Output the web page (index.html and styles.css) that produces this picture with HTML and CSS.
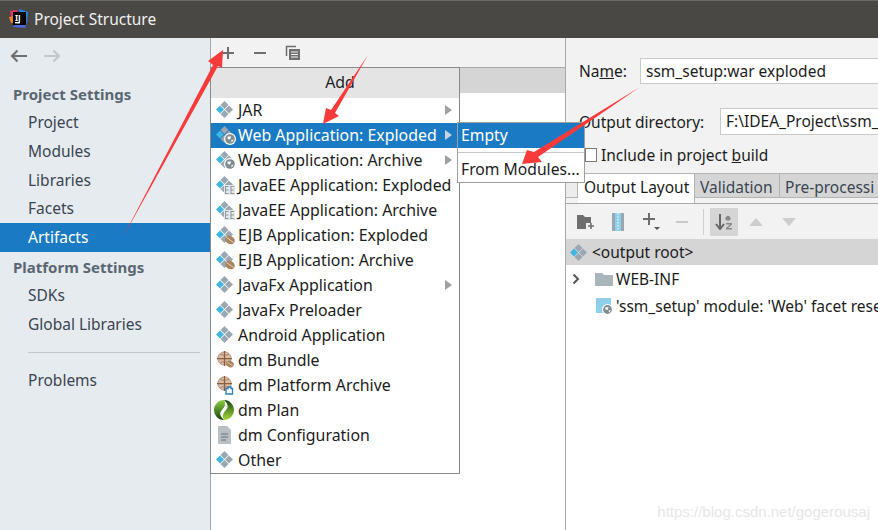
FILE: index.html
```html
<html>
<head>
    <title>Project Structure</title>
    <link rel="stylesheet" href="styles.css">
</head>
<body>
    <svg class="defs" width="0" height="0">
        <defs>
            <linearGradient id="planLeft" x1="0" y1="0" x2="0" y2="1">
                <stop offset="0" stop-color="#8ccf3f"/>
                <stop offset="1" stop-color="#14470f"/>
            </linearGradient>
            <linearGradient id="planRight" x1="0" y1="0" x2="0" y2="1">
                <stop offset="0" stop-color="#14470f"/>
                <stop offset="1" stop-color="#a8d83c"/>
            </linearGradient>
        </defs>
        <symbol id="artifact" viewBox="0 0 17 17">
            <path d="M8.500 0l4 4-4 4-4-4z" fill="#9aa7b0"/>
            <path d="M4 4.500l4 4-4 4-4-4z" fill="#40b6e0"/>
            <path d="M13 4.500l4 4-4 4-4-4z" fill="#9aa7b0"/>
            <path d="M8.500 9l4 4-4 4-4-4z" fill="#9aa7b0"/>
        </symbol>
        <symbol id="globe" viewBox="0 0 10 10">
            <circle cx="5" cy="5" r="5" fill="#fff"/>
            <circle cx="5" cy="5" r="4" fill="#7f8b91"/>
            <path d="M3 3h3l-1 2.500-2-.5zM6 6l2-.5-1.500 2.500z" fill="#fff"/>
        </symbol>
        <symbol id="ee" viewBox="0 0 11 10">
            <path d="M0 0h11v10H0z" fill="#e4e8eb"/>
            <path d="M1 1.500h3.500M1 5h3.500M1 8.500h3.500M1.500 1v8M6.500 1.500H10M6.500 5H10M6.500 8.500H10M7 1v8" stroke="#8d99a2"/>
        </symbol>
        <symbol id="bean" viewBox="0 0 10 10">
            <ellipse cx="5" cy="5" rx="5" ry="4" fill="#a8845f" transform="rotate(30 5 5)"/>
            <path d="M1.500 2.500l7 5" stroke="#e6d9c8"/>
        </symbol>
        <symbol id="bundle" viewBox="0 0 18 18">
            <circle cx="9" cy="9" r="8" fill="#d8bea6" stroke="#a98d78"/>
            <path d="M9 0v18M0 9h18" stroke="#8b5a3c" stroke-width="1.500"/>
            <path d="M4 4c3 1.500 7 1.500 10 0M4 14c3-1.500 7-1.500 10 0" stroke="#a06f50" fill="none"/>
        </symbol>
    </svg>

    <div class="window">
        <div class="titlebar">
            <svg class="logo" width="20" height="20" viewBox="0 0 20 20">
                <path d="M1 2l7-1 3 6-8 6z" fill="#e8336e"/>
                <path d="M10 0l9 3-1 10-6-2z" fill="#1e88e5"/>
                <path d="M0 8l5-1 1 6-4 1z" fill="#f58220"/>
                <path d="M4 18l12 1 3-8-10-2z" fill="#4a67d6"/>
                <rect x="4" y="3" width="13" height="13" fill="#000"/>
                <rect x="6" y="13" width="5" height="1.400" fill="#fff"/>
                <text x="6" y="11.500" class="logo-text">IJ</text>
            </svg>
            <span>Project Structure</span>
        </div>

        <div class="panes">
            <div class="sidebar">
                <div class="nav-arrows">
                    <svg width="18" height="14" viewBox="0 0 18 14"><path d="M17 7H2M7.500 1.500L2 7l5.500 5.500" fill="none" stroke="#6e6e6e" stroke-width="2"/></svg>
                    <svg width="18" height="14" viewBox="0 0 18 14"><path d="M1 7h15M10.500 1.500L16 7l-5.500 5.500" fill="none" stroke="#c4c6c8" stroke-width="2"/></svg>
                </div>
                <div class="side-head">Project Settings</div>
                <div class="side-item">Project</div>
                <div class="side-item">Modules</div>
                <div class="side-item">Libraries</div>
                <div class="side-item">Facets</div>
                <div class="side-item side-active">Artifacts</div>
                <div class="side-head">Platform Settings</div>
                <div class="side-item">SDKs</div>
                <div class="side-item">Global Libraries</div>
                <div class="side-rule"></div>
                <div class="side-item">Problems</div>
            </div>

            <div class="middle">
                <div class="mid-toolbar">
                    <svg width="14" height="14" viewBox="0 0 14 14"><path d="M7 1v12M1 7h12" stroke="#6e6e6e" stroke-width="2"/></svg>
                    <svg width="14" height="14" viewBox="0 0 14 14"><path d="M1 7h12" stroke="#6e6e6e" stroke-width="2"/></svg>
                    <svg width="16" height="16" viewBox="0 0 16 16"><path d="M1.500 11V1.500H11" fill="none" stroke="#6e6e6e" stroke-width="1.500"/><rect x="4" y="4" width="11" height="11" fill="#6e6e6e"/><path d="M6 7h7M6 9.500h7M6 12h7" stroke="#f2f2f2"/></svg>
                </div>
                <div class="mid-band"></div>
            </div>

            <div class="detail">
                <div class="field name-field">
                    <label class="name-label">Na<u>m</u>e:</label>
                    <div class="input">ssm_setup:war exploded</div>
                </div>
                <div class="field dir-field">
                    <label class="dir-label">Output directory:</label>
                    <div class="input">F:\IDEA_Project\ssm_</div>
                </div>
                <div class="check-row">
                    <span class="checkbox"></span>
                    <span>Include in project <u>b</u>uild</span>
                </div>
                <div class="tabs">
                    <div class="tab-stub"></div>
                    <div class="tab tab-on">Output Layout</div>
                    <div class="tab tab-mid">Validation</div>
                    <div class="tab tab-last">Pre-processi</div>
                </div>
                <div class="tool-row">
                    <svg width="18" height="16" viewBox="0 0 18 16"><path d="M0 1h6l2 2h6v6H9v6H0z" fill="#6e6e6e"/><path d="M14 9v6M11 12h6" stroke="#6e6e6e" stroke-width="1.600"/></svg>
                    <svg class="t-zip" width="12" height="18" viewBox="0 0 12 18"><rect width="12" height="18" fill="#9aa7b0"/><path d="M3 0h6v18H3z" fill="#8ed0ea"/><path d="M6 0v18" stroke="#fff" stroke-dasharray="1.500 1.500"/></svg>
                    <svg class="t-plus" width="18" height="18" viewBox="0 0 18 18"><path d="M6 0v12M0 6h12" stroke="#6e6e6e" stroke-width="2"/><path d="M11 14h6l-3 3z" fill="#555"/></svg>
                    <svg class="t-minus" width="12" height="12" viewBox="0 0 12 12"><path d="M0 6h12" stroke="#c8c8c8" stroke-width="2"/></svg>
                    <span class="tool-sep"></span>
                    <span class="sort-btn">
                        <svg width="18" height="16" viewBox="0 0 18 16"><path d="M5 0v14M1 10l4 5 4-5" fill="none" stroke="#666" stroke-width="2"/><path d="M11.500 6.500a2.500 2.500 0 1 1 3 0zM11 9h6v1.500l-4 3.500h4v1.500h-6v-1.500l4-3.500h-4z" fill="#888"/></svg>
                    </span>
                    <svg class="t-up" width="14" height="8" viewBox="0 0 14 8"><path d="M0 8L7 0l7 8z" fill="#cdcdcd"/></svg>
                    <svg class="t-down" width="14" height="8" viewBox="0 0 14 8"><path d="M0 0l7 8 7-8z" fill="#cdcdcd"/></svg>
                </div>
                <div class="tree">
                    <div class="tree-row tree-root">
                        <svg width="17" height="17"><use href="#artifact"/></svg>
                        <span>&lt;output root&gt;</span>
                    </div>
                    <div class="tree-row tree-folder">
                        <svg class="chev" width="8" height="12" viewBox="0 0 8 12"><path d="M1.500 1.500L6 6l-4.500 4.500" fill="none" stroke="#555" stroke-width="2"/></svg>
                        <svg width="18" height="14" viewBox="0 0 18 14"><path d="M0 1h7l2 2h9v11H0z" fill="#aab4bb"/></svg>
                        <span>WEB-INF</span>
                    </div>
                    <div class="tree-row tree-web">
                        <svg width="17" height="17" viewBox="0 0 17 17"><rect width="15" height="15" fill="#8ed0ea"/><use href="#globe" x="6" y="6" width="11" height="11"/></svg>
                        <span>'ssm_setup' module: 'Web' facet rese</span>
                    </div>
                </div>
            </div>
        </div>
    </div>

    <div class="menu">
        <div class="menu-title">Add</div>
        <div class="menu-row"><svg width="22" height="20"><use href="#artifact" y="1" width="17" height="17"/></svg><span>JAR</span><i class="more"></i></div>
        <div class="menu-row menu-sel"><svg width="22" height="20"><use href="#artifact" y="1" width="17" height="17"/><use href="#globe" x="8" y="8" width="12" height="12"/></svg><span>Web Application: Exploded</span><i class="more"></i></div>
        <div class="menu-row"><svg width="22" height="20"><use href="#artifact" y="1" width="17" height="17"/><use href="#globe" x="8" y="8" width="12" height="12"/></svg><span>Web Application: Archive</span><i class="more"></i></div>
        <div class="menu-row"><svg width="22" height="20"><use href="#artifact" y="1" width="17" height="17"/><use href="#ee" x="8" y="10" width="11" height="10"/></svg><span>JavaEE Application: Exploded</span></div>
        <div class="menu-row"><svg width="22" height="20"><use href="#artifact" y="1" width="17" height="17"/><use href="#ee" x="8" y="10" width="11" height="10"/></svg><span>JavaEE Application: Archive</span></div>
        <div class="menu-row"><svg width="22" height="20"><use href="#artifact" y="1" width="17" height="17"/><use href="#bean" x="9" y="10" width="10" height="10"/></svg><span>EJB Application: Exploded</span></div>
        <div class="menu-row"><svg width="22" height="20"><use href="#artifact" y="1" width="17" height="17"/><use href="#bean" x="9" y="10" width="10" height="10"/></svg><span>EJB Application: Archive</span></div>
        <div class="menu-row"><svg width="22" height="20"><use href="#artifact" y="1" width="17" height="17"/></svg><span>JavaFx Application</span><i class="more"></i></div>
        <div class="menu-row"><svg width="22" height="20"><use href="#artifact" y="1" width="17" height="17"/></svg><span>JavaFx Preloader</span></div>
        <div class="menu-row"><svg width="22" height="20"><use href="#artifact" y="1" width="17" height="17"/></svg><span>Android Application</span></div>
        <div class="menu-row"><svg width="22" height="20"><use href="#bundle" x="1" y="1" width="15" height="15"/><use href="#bean" x="10" y="10" width="8" height="8"/></svg><span>dm Bundle</span></div>
        <div class="menu-row"><svg width="22" height="20"><use href="#bundle" x="1" y="1" width="15" height="15"/><path d="M12 12h3v1.500h1.500V19H10v-5.500h2z" fill="#fff" stroke="#2f7fc1" stroke-width="1.400"/></svg><span>dm Platform Archive</span></div>
        <div class="menu-row"><svg class="plan" width="22" height="20" viewBox="0 0 22 20"><path d="M10 0C4 0 0 5 0 10s4 10 10 10C6 16 5 13 8 10c3-3 4-6 2-10z" fill="url(#planLeft)"/><path d="M10 20c6 0 10-5 10-10S16 0 10 0c4 4 5 7 2 10-3 3-4 6-2 10z" fill="url(#planRight)"/></svg><span>dm Plan</span></div>
        <div class="menu-row"><svg width="22" height="20" viewBox="0 0 22 20"><path d="M2 1h9l4 4v14H2z" fill="#b9c0c5"/><path d="M5 9h7M5 12h7M5 15h5" stroke="#6e6e6e"/></svg><span>dm Configuration</span></div>
        <div class="menu-row"><svg width="22" height="20"><use href="#artifact" y="1" width="17" height="17"/></svg><span>Other</span></div>
    </div>

    <div class="submenu">
        <div class="sub-row sub-sel">Empty</div>
        <div class="sub-rule"></div>
        <div class="sub-row">From Modules...</div>
    </div>

    <svg class="arrows" width="878" height="530" viewBox="0 0 878 530">
        <path d="M122 239L213 65 208 61 223 50 222 68 218 66z" fill="#f93a3a"/>
        <path d="M368 55L331 110 326 108 323 124 339 116 335 113z" fill="#f93a3a"/>
        <path d="M640 87L534 152 527 150 522 164 542 162 538 157z" fill="#f93a3a"/>
    </svg>

    <div class="watermark">https://blog.csdn.net/gogerousaj</div>
</body>
</html>
```
FILE: styles.css
```css
html, body {
    margin: 0;
    padding: 0;
}
body {
    width: 878px;
    height: 530px;
    overflow: hidden;
    position: relative;
    font-family: "Noto Sans", sans-serif;
    font-size: 15.500px;
    color: #1c1c1c;
    background-color: #f2f2f2;
}
svg {
    flex: none;
}
.defs {
    position: absolute;
}
.window {
    display: flex;
    flex-direction: column;
    height: 530px;
}
.titlebar {
    height: 38px;
    flex: none;
    display: flex;
    align-items: center;
    gap: 5px;
    padding-left: 9px;
    padding-bottom: 1px;
    box-sizing: border-box;
    background-color: #4a4845;
    border-top: 1px solid #6a6865;
    color: #f0f0f0;
}
.logo-text {
    font-size: 8px;
    font-weight: bold;
    fill: #fff;
}
.panes {
    flex: 1;
    display: flex;
    min-height: 0;
}
.sidebar {
    width: 211px;
    flex: none;
    box-sizing: border-box;
    background-color: #e6ebf0;
    border-right: 1px solid #a8a8a8;
    color: #3a4550;
}
.nav-arrows {
    display: flex;
    gap: 15px;
    padding: 11px 0 0 10px;
    height: 41px;
    box-sizing: border-box;
}
.side-head {
    height: 27px;
    line-height: 27px;
    padding-top: 2px;
    padding-left: 13px;
    font-size: 15px;
    font-weight: bold;
    color: #5a6672;
}
.side-item {
    height: 28.750px;
    line-height: 28px;
    padding-left: 28px;
}
.side-active {
    background-color: #1a7bc4;
    color: #fff;
}
.side-rule {
    margin: 14px 10px 13px 28px;
    border-top: 1px solid #c4c8cc;
}
.middle {
    width: 355px;
    flex: none;
    box-sizing: border-box;
    border-right: 1px solid #a8a8a8;
    background-color: #fff;
}
.mid-toolbar {
    height: 30px;
    box-sizing: border-box;
    display: flex;
    align-items: center;
    gap: 18px;
    padding-left: 10px;
    background-color: #f2f2f2;
    border-bottom: 1px solid #a8a8a8;
}
.mid-band {
    height: 25px;
    background-color: #d5d5d5;
}
.detail {
    flex: 1;
    min-width: 0;
    overflow: hidden;
    display: flex;
    flex-direction: column;
}
.field {
    display: flex;
    align-items: center;
    white-space: nowrap;
    padding-left: 13px;
}
.name-field {
    margin-top: 20px;
}
.name-label {
    width: 61px;
    flex: none;
}
.dir-field {
    margin-top: 24px;
}
.dir-label {
    width: 141px;
    flex: none;
}
.name-field .input {
    height: 26px;
}
.dir-field .input {
    height: 27px;
}
.input {
    flex: none;
    width: 400px;
    line-height: 24px;
    box-sizing: border-box;
    padding-left: 5px;
    background-color: #fff;
    border: 1px solid #c9c9c9;
}
.check-row {
    display: flex;
    align-items: center;
    gap: 4px;
    margin-top: 13px;
    padding-left: 19px;
    height: 14px;
}
.checkbox {
    width: 12px;
    height: 14px;
    box-sizing: border-box;
    background-color: #fff;
    border: 1px solid #7a7a7a;
}
.tabs {
    display: flex;
    align-items: flex-start;
    margin-top: 11px;
    height: 31px;
    flex: none;
    box-sizing: border-box;
    white-space: nowrap;
    border-bottom: 1px solid #a8a8a8;
}
.tab-stub {
    width: 12px;
    height: 25px;
    box-sizing: border-box;
    background-color: #ececec;
    border: 1px solid #b4b4b4;
    border-top: 0;
    border-left: 0;
}
.tab {
    height: 25px;
    line-height: 27px;
    padding-left: 5px;
    box-sizing: border-box;
    background-color: #d5d5d5;
    border: 1px solid #b4b4b4;
    border-left: 0;
    color: #3a4550;
}
.tab-on {
    width: 117px;
    height: 30px;
    padding-left: 6px;
    border-bottom: 0;
    background-color: #fff;
    color: #1c1c1c;
}
.tab-mid {
    width: 85px;
}
.tab-last {
    flex: 1;
    border-right: 0;
}
.tool-row {
    height: 35px;
    flex: none;
    display: flex;
    align-items: center;
    padding-left: 11px;
    box-sizing: border-box;
}
.t-zip {
    margin-left: 17px;
}
.t-plus {
    margin-left: 19px;
}
.t-minus {
    margin-left: 15px;
}
.tool-sep {
    width: 1px;
    height: 26px;
    margin-left: 15px;
    background-color: #cfcfcf;
}
.sort-btn {
    width: 28px;
    height: 28px;
    margin-left: 6px;
    display: flex;
    align-items: center;
    justify-content: center;
    background-color: #d5d5d5;
}
.t-up {
    margin-left: 11px;
}
.t-down {
    margin-left: 19px;
}
.tree {
    flex: 1;
    background-color: #fff;
}
.tree-row {
    display: flex;
    align-items: center;
    white-space: nowrap;
}
.tree-root {
    height: 26px;
    padding-left: 4px;
    gap: 5px;
    background-color: #d5d5d5;
}
.tree-folder {
    height: 27px;
    padding-left: 6px;
    gap: 3px;
}
.chev {
    margin-right: 12px;
}
.tree-web {
    height: 28px;
    padding-left: 30px;
    gap: 3px;
}
.menu {
    position: absolute;
    left: 210px;
    top: 67px;
    width: 250px;
    height: 407px;
    box-sizing: border-box;
    background-color: #fff;
    border: 1px solid #8a8a8a;
    font-size: 15.900px;
}
.menu-title {
    height: 30px;
    line-height: 29px;
    padding-left: 10px;
    text-align: center;
    background-color: #e4e4e4;
}
.menu-row {
    height: 25px;
    box-sizing: border-box;
    padding: 0 0 1px 5px;
    display: flex;
    align-items: center;
    white-space: nowrap;
    position: relative;
}
.plan {
    margin-left: -2px;
    margin-right: 2px;
}
.menu-sel {
    background-color: #1a7bc4;
    color: #fff;
}
.more {
    position: absolute;
    right: 7px;
    top: 7px;
    border-left: 7px solid #a0a0a0;
    border-top: 5px solid transparent;
    border-bottom: 5px solid transparent;
}
.menu-sel .more {
    border-left-color: #c0d4e4;
}
.submenu {
    position: absolute;
    left: 457px;
    top: 122px;
    width: 128px;
    height: 61px;
    box-sizing: border-box;
    background-color: #fff;
    border: 1px solid #a0a0a0;
    font-size: 15.700px;
}
.sub-row {
    height: 25px;
    line-height: 24px;
    padding-left: 3px;
    white-space: nowrap;
}
.sub-sel {
    background-color: #1a7bc4;
    color: #fff;
}
.sub-rule {
    margin: 4px 0;
    border-top: 1px solid #c8c8c8;
}
.arrows {
    position: absolute;
    left: 0;
    top: 0;
}
.watermark {
    position: absolute;
    right: 8px;
    bottom: 10px;
    font-family: "Liberation Sans", sans-serif;
    font-size: 15px;
    color: #e6e6e6;
}
```
